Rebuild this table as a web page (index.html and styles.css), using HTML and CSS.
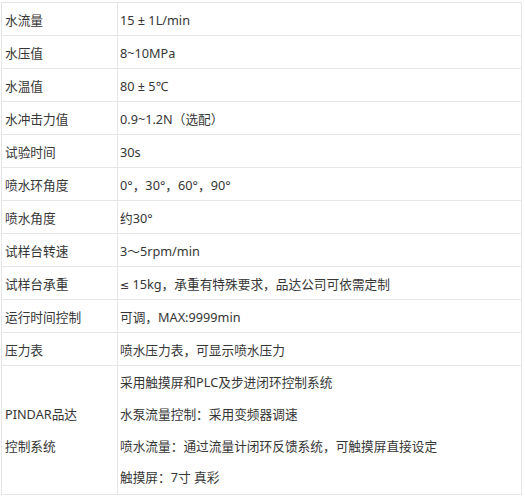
FILE: index.html
```html
<!DOCTYPE html>
<html lang="zh">
<head>
<meta charset="utf-8">
<link rel="stylesheet" href="styles.css">
</head>
<body>
<table class="spec">
  <tr><td class="k">水流量</td><td class="v">15 ± 1L/min</td></tr>
  <tr><td class="k">水压值</td><td class="v">8~10MPa</td></tr>
  <tr><td class="k">水温值</td><td class="v">80 ± 5℃</td></tr>
  <tr><td class="k">水冲击力值</td><td class="v">0.9~1.2N（选配）</td></tr>
  <tr><td class="k">试验时间</td><td class="v">30s</td></tr>
  <tr><td class="k">喷水环角度</td><td class="v">0°，30°，60°，90°</td></tr>
  <tr><td class="k">喷水角度</td><td class="v">约30°</td></tr>
  <tr><td class="k">试样台转速</td><td class="v">3～5rpm/min</td></tr>
  <tr><td class="k">试样台承重</td><td class="v"><span class="sym">≤</span> 15kg，承重有特殊要求，品达公司可依需定制</td></tr>
  <tr><td class="k">运行时间控制</td><td class="v">可调，MAX:9999min</td></tr>
  <tr><td class="k">压力表</td><td class="v">喷水压力表，可显示喷水压力</td></tr>
  <tr>
    <td class="k multi">PINDAR品达<br>控制系统</td>
    <td class="v multi">采用触摸屏和PLC及步进闭环控制系统<br>水泵流量控制：采用变频器调速<br>喷水流量：通过流量计闭环反馈系统，可触摸屏直接设定<br>触摸屏：7寸 真彩</td>
  </tr>
</table>
</body>
</html>
```
FILE: styles.css
```css
html, body {
  margin: 0;
  padding: 0;
  background: #ffffff;
}
.spec {
  margin: 2px 0 0 1px;
  width: 521px;
  border-collapse: collapse;
  font-family: "Noto Sans", "Noto Sans CJK SC", sans-serif;
  font-size: 12.7px;
  color: #363636;
}
.spec td {
  border: 1px solid #e6e6e6;
  height: 32px;
  line-height: 30px;
  padding: 2px 2px 0 2px;
  vertical-align: middle;
  box-sizing: border-box;
}
.spec td.k {
  width: 116px;
  padding-left: 3px;
}
.spec td.multi {
  height: auto;
  line-height: 31.75px;
  padding-top: 1px;
}
.sym {
  font-family: "DejaVu Sans", sans-serif;
  font-size: 11px;
  line-height: 0;
}
```
